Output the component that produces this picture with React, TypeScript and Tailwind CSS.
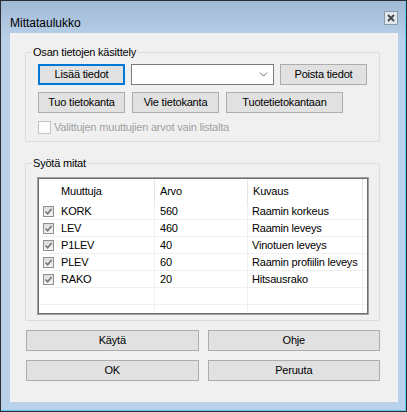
import { ChevronDown } from "lucide-react";

const rows = [
  { name: "KORK", value: "560", desc: "Raamin korkeus" },
  { name: "LEV", value: "460", desc: "Raamin leveys" },
  { name: "P1LEV", value: "40", desc: "Vinotuen leveys" },
  { name: "PLEV", value: "60", desc: "Raamin profiilin leveys" },
  { name: "RAKO", value: "20", desc: "Hitsausrako" },
];

function Button({ label, width, focused }: { label: string; width: string; focused?: boolean }) {
  return (
    <button
      className={`${width} flex h-[21px] items-center justify-center bg-[#e1e1e1] text-black ${
        focused ? "border-2 border-[#0078d7]" : "border border-[#adadad]"
      }`}
    >
      {label}
    </button>
  );
}

function ListCheck() {
  return (
    <span className="flex h-[11px] w-[11px] items-center justify-center border border-[#8f8f8f] bg-[linear-gradient(to_bottom,#dcdcdc,#f4f4f4)]">
      <svg width="9" height="9" viewBox="0 0 9 9">
        <path d="M1.5 4.5 L3.6 6.7 L7.6 2" fill="none" stroke="#777" strokeWidth="1.7" />
      </svg>
    </span>
  );
}

export default function App() {
  return (
    <div className="h-[412px] w-[407px] border border-[#2e2e2e] bg-[linear-gradient(to_bottom,#a0b9d5,#b9d1ea_40px,#b9d1ea)] font-['Liberation_Sans',Arial,sans-serif] text-[11px] tracking-[-0.2px] text-black">
      <div className="flex h-full w-full flex-col border-b border-r border-[#5cc6f4]">
        <div className="flex h-[32px] items-start justify-between pl-[9px] pr-[7px]">
          <span className="pt-[14px] text-[12px] leading-[16px] tracking-normal text-black">Mittataulukko</span>
          <span className="mt-[10px] flex h-[14px] w-[14px] items-center justify-center border border-[#8c9aa8] bg-[#dfe7ef]">
            <svg width="8" height="8" viewBox="0 0 8 8">
              <path d="M1 1 L7 7 M7 1 L1 7" stroke="#444" strokeWidth="1.8" />
            </svg>
          </span>
        </div>

        <div className="ml-[9px] h-[369px] w-[388px] bg-[#f0f0f0] pl-[15px] pt-[19px]">
          <div className="relative w-[355px] rounded-[2px] border border-[#dcdcdc] pb-[7px] pl-[12px] pt-[11px]">
            <span className="absolute left-[6px] top-[-8px] bg-[#f0f0f0] px-[1px] leading-[14px]">
              Osan tietojen käsittely
            </span>
            <div className="flex items-center gap-[6px]">
              <Button label="Lisää tiedot" width="w-[87px]" focused />
              <div className="flex h-[21px] w-[143px] items-center justify-end border border-[#7a7a7a] bg-white pr-[3px]">
                <ChevronDown size={13} strokeWidth={1.4} color="#444" />
              </div>
              <Button label="Poista tiedot" width="w-[87px]" />
            </div>
            <div className="mt-[7px] flex items-center gap-[7px]">
              <Button label="Tuo tietokanta" width="w-[87px]" />
              <Button label="Vie tietokanta" width="w-[87px]" />
              <Button label="Tuotetietokantaan" width="w-[117px]" />
            </div>
            <div className="mt-[8px] flex h-[13px] items-center gap-[3px]">
              <span className="h-[13px] w-[13px] border border-[#c4c4c4] bg-[#fcfcfc]" />
              <span className="leading-[13px] text-[#a0a0a0]">Valittujen muuttujien arvot vain listalta</span>
            </div>
          </div>

          <div className="relative mt-[21px] w-[355px] rounded-[2px] border border-[#dcdcdc] pb-[5px] pl-[11px] pt-[13px]">
            <span className="absolute left-[6px] top-[-8px] bg-[#f0f0f0] px-[1px] leading-[14px]">Syötä mitat</span>
            <div className="h-[138px] w-[332px] border border-[#a0a0a0]">
              <div className="h-full w-full overflow-hidden border border-[#6d6d6d] bg-white">
                <div className="flex h-[24px] items-center">
                  <div className="flex h-full w-[116px] items-center border-r border-[#e5e5e5] pl-[22px]">Muuttuja</div>
                  <div className="flex h-full w-[93px] items-center border-r border-[#e5e5e5] pl-[5px]">Arvo</div>
                  <div className="flex h-full w-[115px] items-center border-r border-[#e5e5e5] pl-[5px]">Kuvaus</div>
                </div>
                {rows.map((r) => (
                  <div key={r.name} className="flex h-[17px] border-b border-[#f0f0f0]">
                    <div className="flex w-[116px] items-center gap-[7px] border-r border-[#f0f0f0] pl-[4px]">
                      <ListCheck />
                      <span>{r.name}</span>
                    </div>
                    <div className="flex w-[93px] items-center border-r border-[#f0f0f0] pl-[5px]">{r.value}</div>
                    <div className="flex w-[115px] items-center border-r border-[#f0f0f0] pl-[4px]">{r.desc}</div>
                  </div>
                ))}
                {[0, 1].map((i) => (
                  <div key={i} className="flex h-[17px] border-b border-[#f0f0f0]">
                    <div className="w-[116px] border-r border-[#f0f0f0]" />
                    <div className="w-[93px] border-r border-[#f0f0f0]" />
                    <div className="w-[115px] border-r border-[#f0f0f0]" />
                  </div>
                ))}
              </div>
            </div>
          </div>

          <div className="mt-[9px] grid w-[355px] grid-cols-2 gap-[9px] pl-[1px]">
            <Button label="Käytä" width="w-full" />
            <Button label="Ohje" width="w-full" />
            <Button label="OK" width="w-full" />
            <Button label="Peruuta" width="w-full" />
          </div>
        </div>
      </div>
    </div>
  );
}
